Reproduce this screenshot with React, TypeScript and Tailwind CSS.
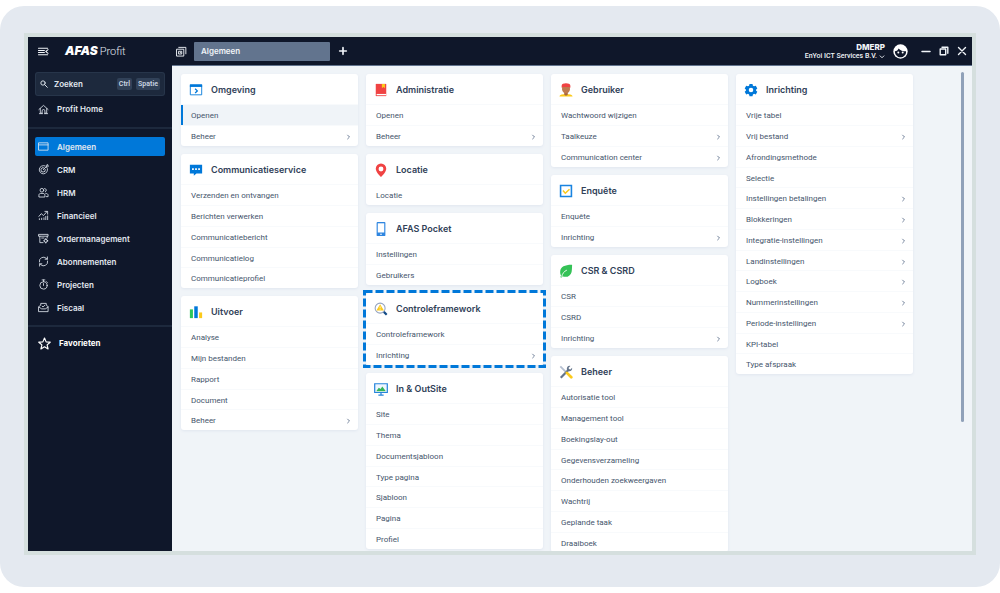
import React from 'react';

type IconProps = { className?: string };
type Item = { label: string; sub?: boolean; active?: boolean };
type CardData = { title: string; icon: React.ReactNode; items: Item[]; marked?: boolean };

const line = {
  fill: 'none',
  stroke: 'currentColor',
  strokeLinecap: 'round' as const,
  strokeLinejoin: 'round' as const,
};

function Svg({ children, className = 'size-[11px]', box = 24, width = 1.8 }: IconProps & { children: React.ReactNode; box?: number; width?: number }) {
  return (
    <svg viewBox={`0 0 ${box} ${box}`} className={`shrink-0 ${className}`} strokeWidth={width} {...line} aria-hidden="true">
      {children}
    </svg>
  );
}

const FoldIcon = () => (
  <Svg className="size-[11px]" width={2.2}>
    <path d="M1 5h20M1 10h13M1 14h13M1 19h20M22 8l-5 4 5 4" />
  </Svg>
);
const TabsIcon = () => (
  <Svg className="size-[11px]" width={2}>
    <path d="M2 7h15v15H2zM6 3h15.500v14M6.500 11.500h6v6h-6zM9.500 14v1" />
  </Svg>
);
const SearchIcon = () => (
  <Svg className="size-2" width={2.8}>
    <circle cx="9" cy="9" r="6.500" />
    <path d="M14 14l8 8" />
  </Svg>
);
const HomeIcon = () => (
  <Svg>
    <path d="M2 12L12 3l10 9M5 10v10h4v-5a3 3 0 0 1 6 0v5h4V10M3 21h7M14 21h7" />
  </Svg>
);
const WindowIcon = () => (
  <Svg>
    <path d="M2 4h20v16H2zM2 8.500h20" />
  </Svg>
);
const TargetIcon = () => (
  <Svg>
    <path d="M15 4a9 9 0 1 0 5.500 6M13 8.300A4.800 4.800 0 1 0 16 12M11.500 12.500L18 6M18 6V3l3-2v3h2l-2.500 3H18" />
  </Svg>
);
const UsersIcon = () => (
  <Svg>
    <circle cx="8.500" cy="7" r="4" />
    <path d="M2 21v-3c0-3 2-4 4-4h5c3 0 4 2 4 4v3zM14.500 3.200a4 4 0 0 1 1.500 7.500M17 14c3 0 5 1.500 5 4v3h-4" />
  </Svg>
);
const TrendIcon = () => (
  <Svg>
    <path d="M2 14l5-6 5 4 8-9M15 3h6v6M3 19v2M8 18v3M13 17v4M17 14v7M21 13v8" />
  </Svg>
);
const OrderIcon = () => (
  <Svg>
    <path d="M2 3h20v4H2zM4 7v14h7M20 7v4M8 11h5" />
    <circle cx="17" cy="17" r="3.500" />
    <path d="M17 12v2M17 20v2M12.500 17h1M20.500 17h1" />
  </Svg>
);
const CycleIcon = () => (
  <Svg>
    <path d="M3 13a9 9 0 0 1 15-8l2 2M20.500 2v5h-5M21 11a9 9 0 0 1-15 8l-2-2M3.500 22v-5h5" />
  </Svg>
);
const StopwatchIcon = () => (
  <Svg>
    <circle cx="12" cy="14" r="8" />
    <path d="M9 2h6M12 2v4M12 10v4M19 6l1.500 1.500" />
  </Svg>
);
const InboxIcon = () => (
  <Svg>
    <path d="M2 10l4-3V3h12v4l4 3v11H2zM2 11l6 4h8l6-4M9 9l2 2 4-4" />
  </Svg>
);
const StarIcon = () => (
  <Svg className="size-[13px]" width={2.2}>
    <path d="M12 2l3 7 7.500.600-5.700 5 1.800 7.400L12 18l-6.600 4 1.800-7.400-5.700-5L9 9z" />
  </Svg>
);
const Chevron = () => (
  <Svg className="size-[6px] text-slate-500" box={8} width={1.2}>
    <path d="M3.500 1.500L6 4 3.500 6.500" />
  </Svg>
);

function CardSvg({ children }: { children: React.ReactNode }) {
  return (
    <svg viewBox="0 0 16 16" className="size-[14px] shrink-0" aria-hidden="true">
      {children}
    </svg>
  );
}

const columns: CardData[][] = [
  [
    {
      title: 'Omgeving',
      icon: (
        <CardSvg>
          <path d="M1.500 2.500h13v11h-13z" fill="#fff" stroke="#0078d9" />
          <path d="M1 1.500h14v3H1z" fill="#0078d9" />
          <path d="M7 6.500L9.500 9 7 11.500" fill="none" stroke="#0078d9" strokeWidth="1.500" />
        </CardSvg>
      ),
      items: [{ label: 'Openen', active: true }, { label: 'Beheer', sub: true }],
    },
    {
      title: 'Communicatieservice',
      icon: (
        <CardSvg>
          <path d="M1 2h14v10H8.500L5.500 14.500V12H1z" fill="#0078d9" />
          <path d="M3.500 6h2v2h-2zM7 6h2v2H7zM10.500 6h2v2h-2z" fill="#fff" />
        </CardSvg>
      ),
      items: [
        { label: 'Verzenden en ontvangen' },
        { label: 'Berichten verwerken' },
        { label: 'Communicatiebericht' },
        { label: 'Communicatielog' },
        { label: 'Communicatieprofiel' },
      ],
    },
    {
      title: 'Uitvoer',
      icon: (
        <CardSvg>
          <path d="M1 5h3.500v10H1z" fill="#2dc75c" />
          <path d="M6 1.500h4V15H6z" fill="#0078d9" />
          <path d="M11.500 8.500H15V15h-3.500z" fill="#fcca1b" />
        </CardSvg>
      ),
      items: [
        { label: 'Analyse' },
        { label: 'Mijn bestanden' },
        { label: 'Rapport' },
        { label: 'Document' },
        { label: 'Beheer', sub: true },
      ],
    },
  ],
  [
    {
      title: 'Administratie',
      icon: (
        <CardSvg>
          <path d="M2 1h12v14H2z" fill="#f04343" />
          <path d="M3 12.500h11v1.500H3z" fill="#fff" />
          <path d="M9 1h3.500v5L10.800 4.600 9 6z" fill="#fcca1b" />
        </CardSvg>
      ),
      items: [{ label: 'Openen' }, { label: 'Beheer', sub: true }],
    },
    {
      title: 'Locatie',
      icon: (
        <CardSvg>
          <path
            fillRule="evenodd"
            d="M8 .5a6 6 0 0 0-6 6C2 10.500 8 16 8 16s6-5.500 6-9.500a6 6 0 0 0-6-6zm0 3.500a2.800 2.800 0 1 1 0 5.600A2.800 2.800 0 0 1 8 4z"
            fill="#f04343"
          />
        </CardSvg>
      ),
      items: [{ label: 'Locatie' }],
    },
    {
      title: 'AFAS Pocket',
      icon: (
        <CardSvg>
          <rect x="3" y="0" width="10" height="16" rx="1" fill="#2f86e0" />
          <path d="M4.300 1.500h7.400V12H4.300z" fill="#fff" />
          <path d="M7 13.500h2v1H7z" fill="#fff" />
        </CardSvg>
      ),
      items: [{ label: 'Instellingen' }, { label: 'Gebruikers' }],
    },
    {
      title: 'Controleframework',
      marked: true,
      icon: (
        <CardSvg>
          <path d="M11 11l3.500 3.500" stroke="#124a85" strokeWidth="2.500" />
          <circle cx="7" cy="7" r="5.700" fill="#fff" stroke="#94a3c0" strokeWidth="1.200" />
          <path d="M7 2.500l4.300 7.200H2.700z" fill="#fcca1b" />
          <path d="M7 5v2.300M7 8v.8" stroke="#fff" strokeWidth=".8" />
        </CardSvg>
      ),
      items: [{ label: 'Controleframework' }, { label: 'Inrichting', sub: true }],
    },
    {
      title: 'In & OutSite',
      icon: (
        <CardSvg>
          <path d="M.8 2h14.400v10H.8z" fill="#eef6ff" stroke="#2684dc" strokeWidth="1.400" />
          <path d="M2.500 10.500l3-4 2 1.500 2-3 4 5.500z" fill="#35b558" />
          <path d="M8 12v2.500M5 15h6" stroke="#2684dc" strokeWidth="1.400" />
        </CardSvg>
      ),
      items: [
        { label: 'Site' },
        { label: 'Thema' },
        { label: 'Documentsjabloon' },
        { label: 'Type pagina' },
        { label: 'Sjabloon' },
        { label: 'Pagina' },
        { label: 'Profiel' },
      ],
    },
  ],
  [
    {
      title: 'Gebruiker',
      icon: (
        <CardSvg>
          <path d="M.5 15.500c0-1.500 1.500-2.500 4.500-2.700h6c3 .2 4.500 1.200 4.500 2.700z" fill="#fcca1b" />
          <path d="M6 9h4v4.500l-2 1.200-2-1.200z" fill="#a5643d" />
          <path d="M3.500 4h9v3.500C12.500 10 10 12 8 12s-4.500-2-4.500-4.500z" fill="#bf7a4f" />
          <path d="M3 5.500V3.200C3 1 5.500.3 8 .3s5 .7 5 2.900v2.300l-1.200-1H4.200z" fill="#f04343" />
        </CardSvg>
      ),
      items: [{ label: 'Wachtwoord wijzigen' }, { label: 'Taalkeuze', sub: true }, { label: 'Communication center', sub: true }],
    },
    {
      title: 'Enquête',
      icon: (
        <CardSvg>
          <path d="M1.800 1.800h12.400v12.400H1.800z" fill="#fff" stroke="#1a84e0" strokeWidth="1.800" />
          <path d="M4.500 7.500l2.700 3L12 6" fill="none" stroke="#fcca1b" strokeWidth="1.700" />
        </CardSvg>
      ),
      items: [{ label: 'Enquête' }, { label: 'Inrichting', sub: true }],
    },
    {
      title: 'CSR & CSRD',
      icon: (
        <CardSvg>
          <path d="M15 1C7.500.8 1.500 3 1.300 9c0 1.700.4 3 1 4L1.500 15l1.700.3.700-1.300c5 2 9.500-.5 10.500-5C15 6 14.800 3 15 1z" fill="#35c257" />
          <path d="M3 14.500C4 11 6 8 9 7" fill="none" stroke="#fff" />
        </CardSvg>
      ),
      items: [{ label: 'CSR' }, { label: 'CSRD' }, { label: 'Inrichting', sub: true }],
    },
    {
      title: 'Beheer',
      icon: (
        <CardSvg>
          <path d="M1.500 1.500l6 6" stroke="#b4bfd0" strokeWidth="2" />
          <path d="M2 14.500L11 5.500" stroke="#64748b" strokeWidth="2.600" />
          <path d="M9 5.500C8.500 2.500 10.500.5 13 1l-2 2 .3 1.700 1.700.3 2-2c.5 2.500-1.500 4.500-4 4z" fill="#64748b" />
          <path d="M9 9l5 5" stroke="#fcca1b" strokeWidth="3.200" strokeLinecap="round" />
        </CardSvg>
      ),
      items: [
        { label: 'Autorisatie tool' },
        { label: 'Management tool' },
        { label: 'Boekingslay-out' },
        { label: 'Gegevensverzameling' },
        { label: 'Onderhouden zoekweergaven' },
        { label: 'Wachtrij' },
        { label: 'Geplande taak' },
        { label: 'Draaiboek' },
      ],
    },
  ],
  [
    {
      title: 'Inrichting',
      icon: (
        <CardSvg>
          <path
            fillRule="evenodd"
            d="M6.300 1h3.400l.5 2 1.300.8 2-.6 1.700 3-1.500 1.400v1l1.500 1.400-1.700 3-2-.6-1.300.8-.5 2H6.300l-.5-2-1.300-.8-2 .6-1.700-3 1.500-1.400v-1L.8 6.200l1.700-3 2 .6L5.800 3zM8 5.500a2.600 2.600 0 1 0 0 5.200 2.600 2.600 0 0 0 0-5.200z"
            fill="#0078d9"
          />
        </CardSvg>
      ),
      items: [
        { label: 'Vrije tabel' },
        { label: 'Vrij bestand', sub: true },
        { label: 'Afrondingsmethode' },
        { label: 'Selectie' },
        { label: 'Instellingen betalingen', sub: true },
        { label: 'Blokkeringen', sub: true },
        { label: 'Integratie-instellingen', sub: true },
        { label: 'Landinstellingen', sub: true },
        { label: 'Logboek', sub: true },
        { label: 'Nummerinstellingen', sub: true },
        { label: 'Periode-instellingen', sub: true },
        { label: 'KPI-tabel' },
        { label: 'Type afspraak' },
      ],
    },
  ],
];

const nav = [
  { label: 'Algemeen', icon: <WindowIcon />, active: true },
  { label: 'CRM', icon: <TargetIcon /> },
  { label: 'HRM', icon: <UsersIcon /> },
  { label: 'Financieel', icon: <TrendIcon /> },
  { label: 'Ordermanagement', icon: <OrderIcon /> },
  { label: 'Abonnementen', icon: <CycleIcon /> },
  { label: 'Projecten', icon: <StopwatchIcon /> },
  { label: 'Fiscaal', icon: <InboxIcon /> },
];

function MenuCard({ card }: { card: CardData }) {
  return (
    <section className="relative rounded-[3px] bg-white shadow-sm shadow-slate-200">
      <h2 className="flex h-[30px] items-center gap-2 px-2 pt-[2px] font-[Inter] text-[9px] font-semibold text-slate-700">
        {card.icon}
        {card.title}
      </h2>
      <ul>
        {card.items.map((item) => (
          <li key={item.label} className="h-[21px] border-t border-slate-50 nth-[4n]:h-5">
            <a
              href="#"
              className={
                item.active
                  ? 'flex h-full items-center justify-between border-l-2 border-[#0078d9] bg-[#f0f4f8] pt-[2px] pr-[7px] pl-2'
                  : 'flex h-full items-center justify-between pt-[2px] pr-[7px] pl-[10px]'
              }
            >
              {item.label}
              {item.sub && <Chevron />}
            </a>
          </li>
        ))}
      </ul>
      {card.marked && (
        <svg className="pointer-events-none absolute -top-[3px] -left-[3px] h-[calc(100%+6px)] w-[calc(100%+6px)]" aria-hidden="true">
          <rect x="1.500" y="1.500" className="h-[calc(100%-3px)] w-[calc(100%-3px)]" fill="none" stroke="#0078d9" strokeWidth="3" strokeDasharray="8 3" />
        </svg>
      )}
    </section>
  );
}

function Sidebar() {
  return (
    <aside className="w-36 shrink-0 bg-[#0f172a] text-[8px] font-semibold text-slate-200">
      <div className="flex flex-col gap-[3px] border-b-2 border-slate-800 px-[7px] pt-[7px] pb-2">
        <label className="flex h-6 items-center gap-[6px] rounded-[3px] border border-slate-700/50 bg-slate-800 pr-1 pl-1">
          <SearchIcon />
          <input
            type="search"
            aria-label="Zoeken"
            placeholder="Zoeken"
            className="w-0 min-w-0 flex-1 bg-transparent outline-none placeholder:text-slate-200"
          />
          <span className="flex gap-1 text-[7px] text-slate-300">
            <kbd className="rounded-[2px] bg-slate-700 px-[2px] py-[1px] font-[Roboto]">Ctrl</kbd>
            <kbd className="rounded-[2px] bg-slate-700 px-[2px] py-[1px] font-[Roboto]">Spatie</kbd>
          </span>
        </label>
        <a href="#" className="flex h-5 items-center gap-2 px-[3px]">
          <HomeIcon />
          Profit Home
        </a>
      </div>
      <nav className="flex flex-col gap-1 border-b-2 border-slate-800 px-[7px] pt-2 pb-2">
        {nav.map((n) => (
          <a
            key={n.label}
            href="#"
            className={
              n.active
                ? 'flex h-[19px] items-center gap-2 rounded-[2px] bg-[#0078d9] px-[3px]'
                : 'flex h-[19px] items-center gap-2 px-[3px]'
            }
          >
            {n.icon}
            {n.label}
          </a>
        ))}
      </nav>
      <a href="#" className="flex h-8 items-center gap-2 px-[10px] font-bold text-white">
        <StarIcon />
        Favorieten
      </a>
    </aside>
  );
}

function Header() {
  return (
    <header className="flex h-7 shrink-0 items-center bg-[#0f172a] text-slate-100">
      <div className="flex w-36 items-center gap-4 pl-[10px]">
        <button type="button" aria-label="Menu">
          <FoldIcon />
        </button>
        <div className="flex items-center gap-[2px] leading-none">
          <span className="text-[12px] font-black italic text-white">AFAS</span>
          <span className="font-[Roboto] text-[11px] font-light text-slate-200">Profit</span>
        </div>
      </div>
      <button type="button" aria-label="Tabbladen" className="ml-1">
        <TabsIcon />
      </button>
      <button type="button" className="ml-[7px] h-[19px] w-[136px] rounded-[1px] bg-slate-500 px-[7px] text-left text-[8px] font-semibold">
        Algemeen
      </button>
      <button type="button" aria-label="Nieuw tabblad" className="ml-2">
        <Svg className="size-[10px]" width={4}>
          <path d="M12 4v16M4 12h16" />
        </Svg>
      </button>
      <button type="button" className="ml-auto flex items-center gap-2 text-right">
        <span className="flex flex-col pt-[2px] text-[7px] leading-[9px] font-medium">
          <span className="text-[8px] font-extrabold">DMERP</span>
          <span className="flex items-center gap-[2px] font-[Roboto]">
            EnYoi ICT Services B.V.
            <Svg className="size-[6px]" box={8} width={1.2}>
              <path d="M1.500 2.500L4 5l2.500-2.500" />
            </Svg>
          </span>
        </span>
        <svg viewBox="0 0 24 24" className="size-[15px]" aria-hidden="true">
          <circle cx="12" cy="12" r="11.500" fill="#fff" />
          <path d="M3 11.500c3-.5 5-2 6-4.500 2.500 3.500 7 4.500 11.800 4.500.7 5.500-3.800 9.800-8.800 9.800S3 17 3 11.500z" fill="#0f172a" />
          <circle cx="8.500" cy="13.500" r="1.600" fill="#fff" />
          <circle cx="15.500" cy="13.500" r="1.600" fill="#fff" />
        </svg>
      </button>
      <div className="mr-[5px] ml-[13px] flex items-center gap-2">
        <button type="button" aria-label="Minimaliseren">
          <Svg className="size-[10px]" box={10} width={1.5}>
            <path d="M1 5.500h8" />
          </Svg>
        </button>
        <button type="button" aria-label="Herstellen">
          <Svg className="size-[10px]" box={10} width={1.4}>
            <path d="M1.200 3h5.500v5.800H1.200zM3 1.200h5.800v6" />
          </Svg>
        </button>
        <button type="button" aria-label="Sluiten">
          <Svg className="size-[10px]" box={10} width={1.4}>
            <path d="M1.500 1.500l7 7M8.500 1.500l-7 7" />
          </Svg>
        </button>
      </div>
    </header>
  );
}

export default function App() {
  return (
    <div className="flex h-screen bg-white py-[6px] font-[Inter,sans-serif]">
      <div className="flex min-w-0 flex-1 rounded-[24px] bg-[#e4e9f0] px-6 pt-[27px] pb-8">
        <div className="flex min-w-0 flex-1 flex-col overflow-hidden border-4 border-[#d5dfde]">
          <Header />
          <div className="flex min-h-0 flex-1">
            <Sidebar />
            <main className="relative min-w-0 flex-1 overflow-hidden border-t border-slate-500 bg-[#f0f4f8] pt-2 pl-[9px] font-[Roboto,sans-serif] text-[8px] text-slate-600">
              <div className="grid max-w-[732px] grid-cols-4 items-start gap-2">
                {columns.map((cards, i) => (
                  <div key={i} className="flex flex-col gap-2">
                    {cards.map((card) => (
                      <MenuCard key={card.title} card={card} />
                    ))}
                  </div>
                ))}
              </div>
              <div className="absolute top-[6px] right-2 h-[350px] w-[3px] rounded-full bg-slate-400" />
            </main>
          </div>
        </div>
      </div>
    </div>
  );
}
